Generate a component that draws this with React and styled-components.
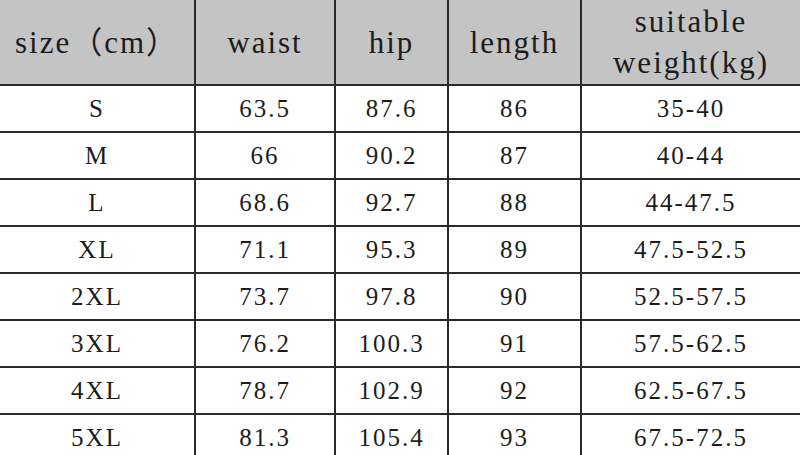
import React from 'react';
import styled, {createGlobalStyle} from 'styled-components';

const GlobalStyle = createGlobalStyle`
    body {
        margin: 0;
        background: #ffffff;
        font-family: "Liberation Serif", "Noto Sans CJK SC", serif;
        color: #1c1c1c;
    }
`;

const columns = [195, 140, 113, 133, 219];

const rows = [
    ['S', '63.5', '87.6', '86', '35-40'],
    ['M', '66', '90.2', '87', '40-44'],
    ['L', '68.6', '92.7', '88', '44-47.5'],
    ['XL', '71.1', '95.3', '89', '47.5-52.5'],
    ['2XL', '73.7', '97.8', '90', '52.5-57.5'],
    ['3XL', '76.2', '100.3', '91', '57.5-62.5'],
    ['4XL', '78.7', '102.9', '92', '62.5-67.5'],
    ['5XL', '81.3', '105.4', '93', '67.5-72.5'],
];

const Sheet = styled.div`
    width: 800px;
    height: 455px;
    overflow: hidden;
`;

const Table = styled.table`
    width: 800px;
    table-layout: fixed;
    border-collapse: collapse;
    border-style: hidden;
`;

const HeadRow = styled.tr`
    height: 85px;
`;

// last row runs past the bottom edge of the picture
const Row = styled.tr`
    height: ${(p) => (p.$cut ? '60px' : '47px')};
`;

const HeadCell = styled.th`
    padding: 0;
    background: #c4c4c4;
    border: 2px solid #2a2a2a;
    font-weight: normal;
    font-size: 31px;
    line-height: 41px;
    letter-spacing: 2px;
    text-align: center;
`;

const Cell = styled.td`
    padding: ${(p) => (p.$cut ? '0 0 13px' : '0')};
    border: 2px solid #2a2a2a;
    font-size: 25px;
    letter-spacing: 2px;
    text-align: center;
    vertical-align: middle;
`;

const SizeChart = () => {
    return (
        <Sheet>
            <Table>
                <colgroup>
                    {columns.map((w, i) => (
                        <col key={i} style={{width: w}} />
                    ))}
                </colgroup>
                <thead>
                    <HeadRow>
                        <HeadCell>size（cm）</HeadCell>
                        <HeadCell>waist</HeadCell>
                        <HeadCell>hip</HeadCell>
                        <HeadCell>length</HeadCell>
                        <HeadCell>suitable<br />weight(kg)</HeadCell>
                    </HeadRow>
                </thead>
                <tbody>
                    {rows.map((row, r) => {
                        const cut = r === rows.length - 1;
                        return (
                            <Row key={row[0]} $cut={cut}>
                                {row.map((value, i) => (
                                    <Cell key={i} $cut={cut}>{value}</Cell>
                                ))}
                            </Row>
                        );
                    })}
                </tbody>
            </Table>
        </Sheet>
    );
};

export default function App() {
    return (
        <>
            <GlobalStyle />
            <SizeChart />
        </>
    );
}
